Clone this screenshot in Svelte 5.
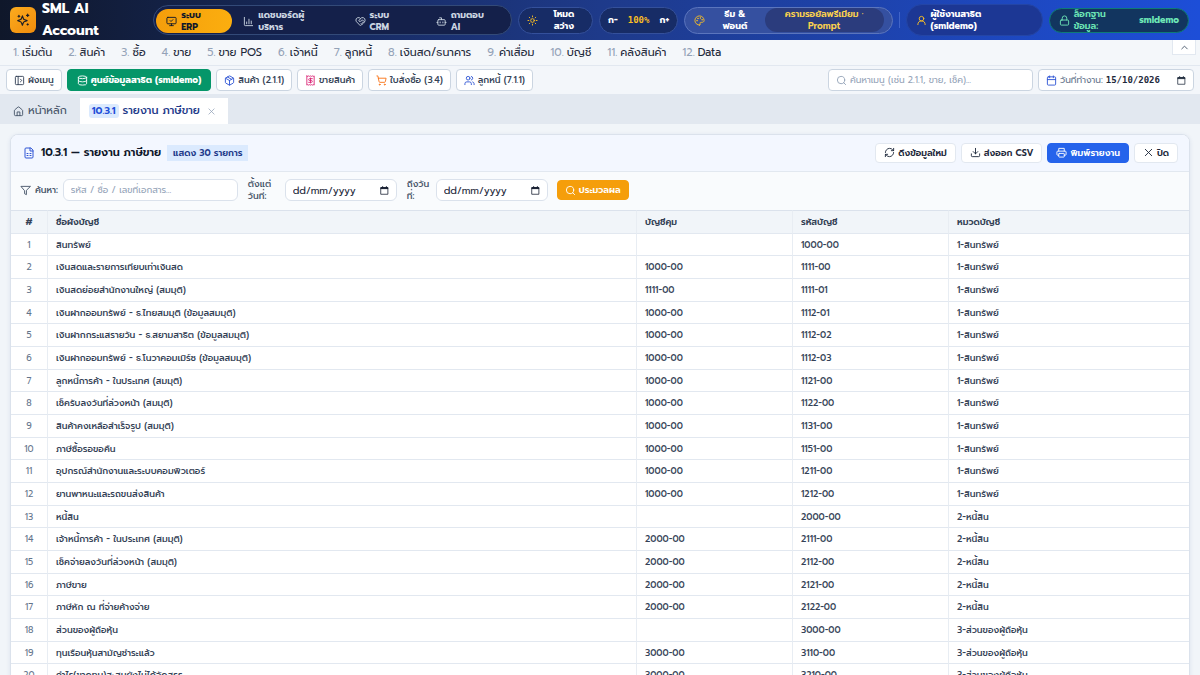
<script>
  const icons = {
    sparkles: '<path d="M11 5l1.800 4.800a2 2 0 0 0 1.200 1.200L19 13l-5 1.900a2 2 0 0 0-1.200 1.200L11 21l-1.900-4.900a2 2 0 0 0-1.200-1.200L3 13l4.900-2a2 2 0 0 0 1.200-1.200z"/><path d="M20 2v4M18 4h4M5 4v3M3.500 5.500h3M20 18.500v2M19 19.500h2"/>',
    monitor: '<path d="m9 10 2 2 4-4"/><rect width="20" height="14" x="2" y="3" rx="2"/><path d="M12 17v4M8 21h8"/>',
    chart: '<path d="M3 3v16a2 2 0 0 0 2 2h16M8 17v-4M13 17V7M18 17v-6"/>',
    heart: '<path d="M19.400 14.400C21 12.800 22 11 22 9a5.500 5.500 0 0 0-10-3.200A5.500 5.500 0 0 0 2 9c0 2.300 1.500 4 3 5.500l5.500 5.300a2 2 0 0 0 3 0z"/><path d="M12 6 9.100 8.800a2 2 0 0 0 0 2.800 2 2 0 0 0 2.700.1l2.100-1.900a2.800 2.800 0 0 1 3.800 0l2.900 2.700M18 15l-2-2M15 18l-2-2"/>',
    bot: '<path d="M12 8V4H8"/><rect width="16" height="12" x="4" y="8" rx="2"/><path d="M2 14h2M20 14h2M15 13v2M9 13v2"/>',
    sun: '<circle cx="12" cy="12" r="4"/><path d="M12 2v2M12 20v2M4.900 4.900l1.400 1.400M17.700 17.700l1.400 1.400M2 12h2M20 12h2M6.300 17.700l-1.400 1.400M19.100 4.900l-1.400 1.400"/>',
    palette: '<path d="M12 22a10 10 0 1 1 10-10c0 3-2.500 4-5 4h-2.200a1.700 1.700 0 0 0-1.300 2.800c.900 1.200.400 3.200-1.500 3.200z"/><circle cx="13.500" cy="6.500" r=".5"/><circle cx="17.500" cy="10.500" r=".5"/><circle cx="8.500" cy="7.500" r=".5"/><circle cx="6.500" cy="12.500" r=".5"/>',
    user: '<circle cx="12" cy="8" r="5"/><path d="M20 21a8 8 0 0 0-16 0"/>',
    lock: '<rect width="18" height="11" x="3" y="11" rx="2"/><path d="M7 11V7a5 5 0 0 1 10 0v4"/>',
    panel: '<rect width="18" height="18" x="3" y="3" rx="2"/><path d="M9 3v18M14 9l3 3-3 3"/>',
    database: '<ellipse cx="12" cy="5" rx="9" ry="3"/><path d="M3 5v14a9 3 0 0 0 18 0V5M3 12a9 3 0 0 0 18 0"/>',
    box: '<path d="M21 8a2 2 0 0 0-1-1.700l-7-4a2 2 0 0 0-2 0l-7 4A2 2 0 0 0 3 8v8a2 2 0 0 0 1 1.700l7 4a2 2 0 0 0 2 0l7-4a2 2 0 0 0 1-1.700zM3.300 7 12 12l8.700-5M12 22V12M7.500 4.300l9 5.100"/>',
    receipt: '<path d="M4 2v20l2-1 2 1 2-1 2 1 2-1 2 1 2-1 2 1V2l-2 1-2-1-2 1-2-1-2 1-2-1-2 1z"/><path d="M16 8h-6a2 2 0 0 0 0 4h4a2 2 0 0 1 0 4H8M12 17.500v-11"/>',
    cart: '<circle cx="8" cy="21" r="1"/><circle cx="19" cy="21" r="1"/><path d="M2 2h2l2.700 12.400a2 2 0 0 0 2 1.600h9.700a2 2 0 0 0 2-1.600L22 7H5.100"/>',
    users: '<circle cx="9" cy="7" r="4"/><path d="M16 21v-2a4 4 0 0 0-4-4H6a4 4 0 0 0-4 4v2M22 21v-2a4 4 0 0 0-3-3.900M16 3.100a4 4 0 0 1 0 7.800"/>',
    search: '<circle cx="11" cy="11" r="8"/><path d="m21 21-4.300-4.300"/>',
    calendar: '<path d="M8 2v4M16 2v4M3 10h18"/><rect width="18" height="18" x="3" y="4" rx="2"/>',
    house: '<path d="M15 21v-8H9v8"/><path d="M3 10a2 2 0 0 1 .7-1.500l7-6a2 2 0 0 1 2.600 0l7 6A2 2 0 0 1 21 10v9a2 2 0 0 1-2 2H5a2 2 0 0 1-2-2z"/>',
    close: '<path d="M19 5 5 19M5 5l14 14"/>',
    file: '<path d="M15 2H6a2 2 0 0 0-2 2v16a2 2 0 0 0 2 2h12a2 2 0 0 0 2-2V7zM14 2v6h6M8 13h2M14 13h2M8 17h2M14 17h2"/>',
    refresh: '<path d="M3 12a9 9 0 0 1 9-9 9.700 9.700 0 0 1 6.700 2.700L21 8M21 3v5h-5M21 12a9 9 0 0 1-9 9 9.700 9.700 0 0 1-6.700-2.700L3 16M8 16H3v5"/>',
    download: '<path d="M12 15V3M7 10l5 5 5-5M21 15v4a2 2 0 0 1-2 2H5a2 2 0 0 1-2-2v-4"/>',
    printer: '<path d="M6 18H4a2 2 0 0 1-2-2v-5a2 2 0 0 1 2-2h16a2 2 0 0 1 2 2v5a2 2 0 0 1-2 2h-2M6 9V3h12v6"/><rect width="12" height="8" x="6" y="14" rx="1"/>',
    funnel: '<path d="M22 3H2l8 9.500V19l4 2v-8.500z"/>',
    up: '<path d="m6 15 6-6 6 6"/>',
    picker: '<path d="M3 5h18v17H3z"/><path d="M3 4h18v3H3z" fill="currentColor"/><path d="M7 1v3M17 1v3"/>'
  };

  const systems = [
    { icon: 'monitor', a: 'ระบบ', b: 'ERP', active: true },
    { icon: 'chart', a: 'แดชบอร์ดผู้', b: 'บริหาร' },
    { icon: 'heart', a: 'ระบบ', b: 'CRM' },
    { icon: 'bot', a: 'ถามตอบ', b: 'AI' }
  ];
  const menus = ['เริ่มต้น', 'สินค้า', 'ซื้อ', 'ขาย', 'ขาย POS', 'เจ้าหนี้', 'ลูกหนี้', 'เงินสด/ธนาคาร', 'ค่าเสื่อม', 'บัญชี', 'คลังสินค้า', 'Data'];
  const shortcuts = [
    { icon: 'panel', text: 'ผังเมนู', tone: 'slate' },
    { icon: 'database', text: 'ศูนย์ข้อมูลสาธิต (smldemo)', tone: 'green' },
    { icon: 'box', text: 'สินค้า (2.1.1)', tone: 'blue' },
    { icon: 'receipt', text: 'ขายสินค้า', tone: 'pink' },
    { icon: 'cart', text: 'ใบสั่งซื้อ (3.4)', tone: 'orange' },
    { icon: 'users', text: 'ลูกหนี้ (7.1.1)', tone: 'blue' }
  ];
  const asset = '1-สินทรัพย์';
  const debt = '2-หนี้สิน';
  const equity = '3-ส่วนของผู้ถือหุ้น';
  const rows = [
    ['สินทรัพย์', '', '1000-00', asset],
    ['เงินสดและรายการเทียบเท่าเงินสด', '1000-00', '1111-00', asset],
    ['เงินสดย่อยสำนักงานใหญ่ (สมมุติ)', '1111-00', '1111-01', asset],
    ['เงินฝากออมทรัพย์ - ธ.ไทยสมมุติ (ข้อมูลสมมุติ)', '1000-00', '1112-01', asset],
    ['เงินฝากกระแสรายวัน - ธ.สยามสาธิต (ข้อมูลสมมุติ)', '1000-00', '1112-02', asset],
    ['เงินฝากออมทรัพย์ - ธ.โนวาคอมเมิร์ซ (ข้อมูลสมมุติ)', '1000-00', '1112-03', asset],
    ['ลูกหนี้การค้า - ในประเทศ (สมมุติ)', '1000-00', '1121-00', asset],
    ['เช็ครับลงวันที่ล่วงหน้า (สมมุติ)', '1000-00', '1122-00', asset],
    ['สินค้าคงเหลือสำเร็จรูป (สมมุติ)', '1000-00', '1131-00', asset],
    ['ภาษีซื้อรอขอคืน', '1000-00', '1151-00', asset],
    ['อุปกรณ์สำนักงานและระบบคอมพิวเตอร์', '1000-00', '1211-00', asset],
    ['ยานพาหนะและรถขนส่งสินค้า', '1000-00', '1212-00', asset],
    ['หนี้สิน', '', '2000-00', debt],
    ['เจ้าหนี้การค้า - ในประเทศ (สมมุติ)', '2000-00', '2111-00', debt],
    ['เช็คจ่ายลงวันที่ล่วงหน้า (สมมุติ)', '2000-00', '2112-00', debt],
    ['ภาษีขาย', '2000-00', '2121-00', debt],
    ['ภาษีหัก ณ ที่จ่ายค้างจ่าย', '2000-00', '2122-00', debt],
    ['ส่วนของผู้ถือหุ้น', '', '3000-00', equity],
    ['ทุนเรือนหุ้นสามัญชำระแล้ว', '3000-00', '3110-00', equity],
    ['กำไร(ขาดทุน)สะสมยังไม่ได้จัดสรร', '3000-00', '3210-00', equity]
  ];
</script>

{#snippet icon(name, size = 11)}
  <svg class="icon" width={size} height={size} viewBox="0 0 24 24" fill="none" stroke="currentColor" stroke-width="2" stroke-linecap="round" stroke-linejoin="round" aria-hidden="true">{@html icons[name]}</svg>
{/snippet}

<div class="app">
  <header class="top">
    <div class="brand">
      <span class="logo">{@render icon('sparkles', 14)}</span>
      <strong>SML AI<br />Account</strong>
    </div>
    <nav class="systems">
      {#each systems as s}
        <button class="system" class:active={s.active}>
          {@render icon(s.icon)}<span>{s.a}<br />{s.b}</span>
        </button>
      {/each}
    </nav>
    <button class="pill mode">{@render icon('sun')}<span>โหมด<br />สว่าง</span></button>
    <div class="pill zoom">
      <button>ก-</button><output>100%</output><button>ก+</button>
    </div>
    <button class="pill theme">
      {@render icon('palette')}
      <span class="themelabel">ธีม &amp;<br />ฟอนต์</span>
      <span class="themename">ครามรอยัลพรีเมียม ·<br />Prompt</span>
    </button>
    <span class="rule"></span>
    <div class="pill account">{@render icon('user')}<span>ผู้ใช้งานสาธิต<br />(smldemo)</span></div>
    <div class="pill db">{@render icon('lock')}<span>ล็อกฐาน<br />ข้อมูล:</span><b>smldemo</b></div>
  </header>

  <nav class="menubar">
    {#each menus as m, i}
      <button><span class="no">{i + 1}.</span>{m}</button>
    {/each}
    <button class="collapse" aria-label="ย่อเมนู">{@render icon('up')}</button>
  </nav>

  <div class="toolbar">
    {#each shortcuts as s}
      <button class="btn {s.tone}">{@render icon(s.icon)}<span>{s.text}</span></button>
    {/each}
    <label class="field menusearch">
      {@render icon('search')}
      <input type="text" placeholder="ค้นหาเมนู (เช่น 2.1.1, ขาย, เช็ค)..." />
    </label>
    <label class="field workdate">
      {@render icon('calendar')}<span>วันที่ทำงาน:</span>
      <input type="text" value="15/10/2026" />
      {@render icon('picker', 9)}
    </label>
  </div>

  <div class="tabs">
    <button class="tab">{@render icon('house')}<span>หน้าหลัก</span></button>
    <button class="tab current"><b>10.3.1</b><span>รายงาน ภาษีขาย</span>{@render icon('close', 9)}</button>
  </div>

  <main>
    <section class="card">
      <div class="cardhead">
        {@render icon('file', 12)}
        <h1>10.3.1 — รายงาน ภาษีขาย</h1>
        <span class="count">แสดง 30 รายการ</span>
        <div class="actions">
          <button class="act">{@render icon('refresh')}<span>ดึงข้อมูลใหม่</span></button>
          <button class="act">{@render icon('download')}<span>ส่งออก CSV</span></button>
          <button class="act primary">{@render icon('printer')}<span>พิมพ์รายงาน</span></button>
          <button class="act">{@render icon('close')}<span>ปิด</span></button>
        </div>
      </div>
      <div class="filters">
        {@render icon('funnel')}
        <label class="find" for="find">ค้นหา:</label>
        <input id="find" class="box" type="text" placeholder="รหัส / ชื่อ / เลขที่เอกสาร..." />
        <label class="range from" for="from">ตั้งแต่<br />วันที่:</label>
        <span class="box date"><input id="from" type="text" placeholder="dd/mm/yyyy" />{@render icon('picker', 9)}</span>
        <label class="range to" for="to">ถึงวัน<br />ที่:</label>
        <span class="box date"><input id="to" type="text" placeholder="dd/mm/yyyy" />{@render icon('picker', 9)}</span>
        <button class="act run">{@render icon('search')}<span>ประมวลผล</span></button>
      </div>
      <table>
        <thead>
          <tr><th>#</th><th>ชื่อผังบัญชี</th><th>บัญชีคุม</th><th>รหัสบัญชี</th><th>หมวดบัญชี</th></tr>
        </thead>
        <tbody>
          {#each rows as r, i}
            <tr><td>{i + 1}</td>{#each r as c}<td>{c}</td>{/each}</tr>
          {/each}
        </tbody>
      </table>
    </section>
  </main>
</div>

<style>
  :global(body) { margin: 0; background: #f1f5f9; }
  .app, .app :is(button, input) { font-family: Prompt, Kanit, "Noto Sans Thai", Inter, sans-serif; }
  .app { height: 100vh; overflow: hidden; display: flex; flex-direction: column; font-size: 9px; line-height: 12px; color: #1e293b; }
  .app * { box-sizing: border-box; }
  button { border: 0; margin: 0; padding: 0; background: none; color: inherit; font-size: inherit; font-weight: inherit; line-height: inherit; white-space: nowrap; cursor: pointer; }
  input { border: 0; outline: 0; margin: 0; padding: 0; background: none; color: inherit; font-size: inherit; min-width: 0; }
  .icon { flex: none; display: block; }

  .top { flex: none; display: grid; grid-template-rows: 40px; grid-template-columns: 137fr 358fr 75fr 79fr 208fr 1px 137fr 140fr; align-items: center; gap: 6px; padding: 0 11px 0 10px; color: #fff; background: linear-gradient(90deg, #0f172a, #1e3a8a 50%, #1d4ed8); font-weight: 700; }
  .brand { display: flex; align-items: center; gap: 6px; }
  .brand strong { font-size: 14px; line-height: 22px; font-weight: 700; }
  .logo { width: 26px; height: 26px; border-radius: 6px; background: linear-gradient(135deg, #fbab1e, #f08c0c); color: #1a1c24; display: grid; place-items: center; }
  .systems { height: 30px; display: grid; grid-template-columns: 76fr 111fr 81fr 84fr; padding: 3px 2px; border: 1px solid #334a78; border-radius: 15px; background: #14204a; min-width: 0; }
  .system { min-width: 0; display: flex; align-items: center; gap: 4px; padding-left: 11px; border-radius: 12px; text-align: left; color: #cbd5e1; }
  .system.active { background: linear-gradient(90deg, #f59e0b, #fbae0f); color: #0f172a; padding-left: 10px; }
  .pill { height: 27px; border-radius: 16px; border: 1px solid #34509b; background: #172c66; display: flex; align-items: center; padding: 0 8px; min-width: 0; }
  .mode .icon, .theme .icon, .account .icon { color: #fbbf24; }
  .mode span { flex: 1; padding-left: 6px; }
  .zoom { justify-content: space-between; }
  .zoom output { font-family: "DejaVu Sans Mono", monospace; color: #fbbf24; }
  .theme { background: #3550a0; border-color: #5b75bd; padding-left: 9px; }
  .themelabel { flex: 1; }
  .themename { flex: 2 1 0; border-radius: 12px; background: #2b3c7d; color: #fcd34d; font-weight: 600; }
  .rule { height: 16px; background: #4064c8; }
  .account { height: 32px; background: #1c3794; border-color: #2445a5; padding: 0 9px; gap: 4px; }
  .db { height: 25px; background: #12355f; border-color: #0d7b77; color: #6ee7b7; gap: 4px; padding: 0 9px; font-weight: 600; }
  .db b { margin-left: auto; font-weight: 700; }

  .menubar { flex: none; height: 26px; display: flex; align-items: center; gap: 16px; padding: 0 4px 0 13px; border-bottom: 1px solid #e2e8f0; font-size: 11px; line-height: 16px; background: #f4f7fa; }
  .no { color: #94a3b8; margin-right: 3px; }
  .collapse { margin-left: auto; align-self: flex-start; width: 24px; height: 15px; display: grid; place-items: center; background: #fff; border: 1px solid #e2e8f0; border-top: 0; color: #475569; }

  .toolbar { flex: none; height: 28px; display: flex; align-items: center; gap: 5px; padding: 0 6px; background: #f3f6fa; }
  .btn, .field { height: 22px; display: flex; align-items: center; gap: 3px; padding: 0 7px; border: 1px solid #cbd5e1; border-radius: 4px; background: #fff; color: #334155; font-weight: 500; }
  .btn.green { background: #059669; border-color: #059669; color: #fff; font-weight: 700; padding: 0 9px; }
  .blue .icon { color: #2f55d4; } .pink .icon { color: #db2777; } .orange .icon { color: #f97316; }
  .menusearch { margin-left: auto; flex: 0 1 205px; font-weight: 400; }
  .menusearch .icon { color: #94a3b8; }
  .menusearch input { flex: 1; }
  input::placeholder { color: #94a3b8; opacity: 1; }
  .workdate { flex: 0 0 156px; font-weight: 400; color: #64748b; }
  .workdate .icon:first-child { color: #2f55d4; }
  .workdate input { flex: 1; width: 0; font-family: "DejaVu Sans Mono", monospace; font-weight: 700; color: #1e293b; }
  .workdate .icon:last-child { color: #1e293b; }

  .tabs { flex: none; height: 30px; display: flex; align-items: flex-end; background: #e2e8f0; font-size: 11px; line-height: 16px; }
  .tab { height: 26px; display: flex; align-items: center; gap: 4px; padding: 0 13px; color: #475569; }
  .tab.current { background: #fff; color: #1e3a8a; font-weight: 500; padding: 0 12px 0 9px; }
  .current b { background: #dbeafe; color: #1d4ed8; font-size: 10px; line-height: 14px; font-weight: 600; padding: 0 3px; border-radius: 3px; }
  .current .icon { color: #94a3b8; margin-left: 3px; }

  main { flex: 1; min-height: 0; padding: 10px 10px 0; }
  .card { border: 1px solid #dbe2ec; border-radius: 8px 8px 0 0; background: #fff; overflow: hidden; box-shadow: 0 1px 4px #1e3a8a1a; }
  .cardhead { height: 37px; display: flex; align-items: center; gap: 6px; padding: 0 11px 1px 12px; background: #f3f7ff; border-bottom: 1px solid #e2e8f0; }
  .cardhead > .icon { color: #2f55d4; }
  h1 { margin: 0; font-size: 11px; line-height: 16px; font-weight: 600; color: #0f172a; }
  .count { padding: 0 6px; line-height: 16px; background: #dbeafe; color: #1e3a8a; font-weight: 600; }
  .actions { margin-left: auto; display: flex; gap: 5px; }
  .act { height: 20px; display: flex; align-items: center; gap: 3px; padding: 0 8px; border: 1px solid #e2e8f0; border-radius: 4px; background: #fff; color: #1e293b; font-weight: 600; }
  .primary { background: #2563eb; border-color: #2563eb; color: #fff; }
  .filters { height: 38px; display: flex; align-items: center; padding: 0 9px 2px; background: #f9fbfd; color: #475569; }
  .find { margin: 0 5px 0 4px; font-weight: 500; }
  .box { height: 22px; border: 1px solid #dbe2ec; border-radius: 6px; background: #fff; padding: 0 7px; }
  #find { flex: 0 1 175px; }
  .range { margin-left: 10px; font-weight: 500; }
  .from { width: 37px; } .to { width: 29px; }
  .date { flex: 0 1 112px; min-width: 0; display: flex; align-items: center; color: #0f172a; }
  .date input { flex: 1; width: 0; font-size: 10px; }
  .date input::placeholder { color: #1e293b; }
  .run { margin-left: 9px; padding: 0 7px; background: #f59e0b; border-color: #f59e0b; color: #fff; }

  table { width: 100%; table-layout: fixed; border-collapse: separate; border-spacing: 0; }
  th, td { padding: 0 8px; text-align: left; border-right: 1px solid #e8edf3; border-bottom: 1px solid #e2e8f0; font-weight: 500; color: #334155; white-space: nowrap; overflow: hidden; }
  th { height: 24px; background: #f1f5f9; border-top: 1px solid #dbe2ec; font-weight: 600; }
  td { height: 23px; }
  tr:nth-child(3n + 1) td { height: 22px; }
  th:first-child { width: 37px; }
  :is(th, td):first-child { text-align: center; }
  td:first-child { color: #64748b; font-weight: 400; }
  th:nth-child(2) { width: 50%; }
  th:nth-child(3), th:nth-child(4) { width: 156px; }
  :is(th, td):last-child { border-right: 0; }
</style>
